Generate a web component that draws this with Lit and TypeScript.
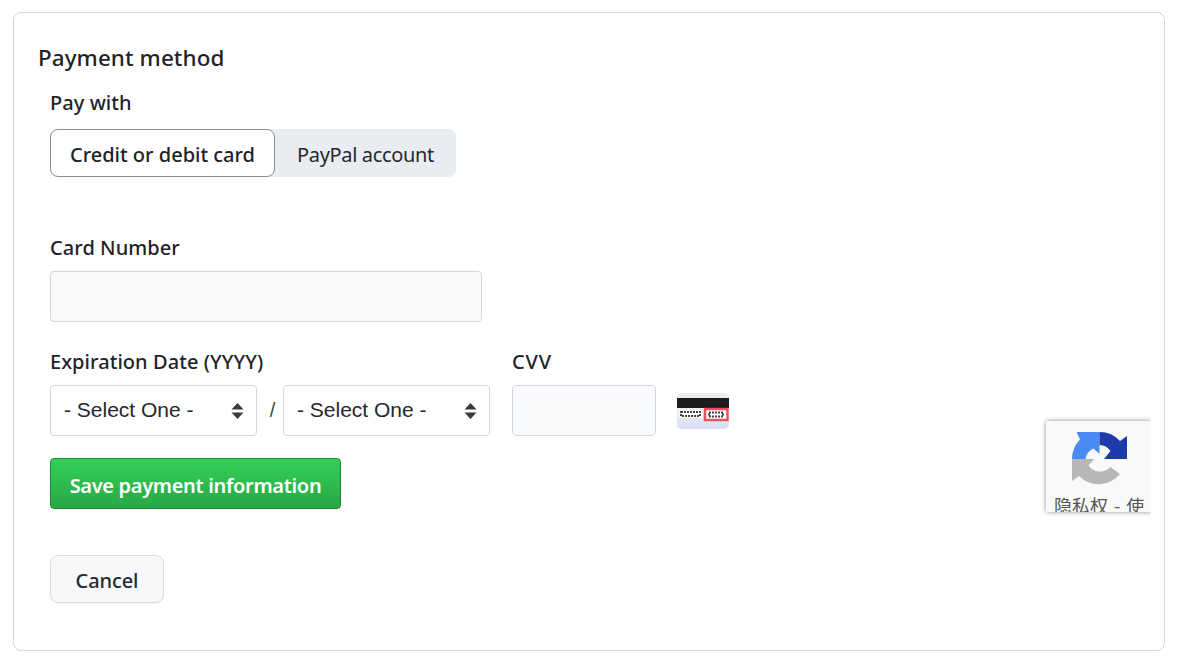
import { LitElement, html, css } from "lit";
import { customElement } from "lit/decorators.js";

@customElement("app-root")
export class AppRoot extends LitElement {
  static styles = css`
    :host { display: block; height: 661px; overflow: hidden; background: #fff; font-family: "Noto Sans", "Open Sans", sans-serif; color: #1f2328; }
    .card { position: relative; box-sizing: border-box; margin: 12px 14px 0 13px; height: 639px; border: 1px solid #d3d6dc; border-radius: 8px; padding: 28px 24px 0 24px; }
    h2 { margin: 0; font-size: 22.4px; line-height: 34px; font-weight: 500; letter-spacing: 0.1px; }
    .body { padding-left: 12px; display: flex; flex-direction: column; align-items: flex-start; }
    .label { font-size: 20px; line-height: 28px; font-weight: 500; letter-spacing: 0.06px; }
    .label.wide { letter-spacing: 0.9px; }
    .paywith { margin-top: 14px; }
    .seg { display: flex; margin-top: 12px; height: 48px; background: #e9ecf1; border-radius: 8px; }
    .seg div { box-sizing: border-box; display: flex; align-items: center; justify-content: center; font-size: 20px; padding-top: 2px; }
    .on { width: 225px; background: #fff; border: 1px solid #868f9e; border-radius: 8px; font-weight: 500; letter-spacing: 0; }
    .off { width: 181px; letter-spacing: -0.35px; color: #25292e; }
    .cardnum { margin-top: 57px; }
    input { box-sizing: border-box; display: block; background: #f9fafc; border: 1px solid #d3d6dc; border-radius: 4px; height: 51px; outline: none; padding: 0; }
    .num { width: 432px; margin-top: 9px; }
    .row { display: flex; margin-top: 26px; gap: 22px; }
    .row .label { height: 28px; }
    .controls { display: flex; align-items: center; margin-top: 9px; }
    .sel { box-sizing: border-box; width: 207px; height: 51px; background: #fff; border: 1px solid #d3d6dc; border-radius: 4px; display: flex; align-items: center; justify-content: space-between; padding: 0 12px 2px 13px; font-family: "Liberation Sans", Arial, sans-serif; font-size: 21px; color: #25292e; }
    .sel svg { margin-top: 2px; }
    .slash { width: 26px; padding-left: 5px; box-sizing: border-box; text-align: center; font-family: "Liberation Sans", Arial, sans-serif; font-size: 20px; color: #444; }
    .cvv { width: 144px; }
    .cvvrow { gap: 21px; }
    .save { box-sizing: border-box; margin-top: 22px; width: 291px; height: 51px; border: 1px solid #22863a; border-radius: 4px; background: linear-gradient(#34d058, #28a745); color: #fff; font-size: 20px; font-weight: 600; font-family: inherit; letter-spacing: -0.32px; padding: 3px 0 0; }
    .cancel { box-sizing: border-box; margin-top: 46px; width: 114px; height: 48px; border: 1px solid #d8dce2; border-radius: 8px; background: #f6f8fa; color: #25292e; font-size: 20px; font-weight: 500; font-family: inherit; letter-spacing: -0.1px; padding: 2px 0 0; box-shadow: 0 1px 0 rgba(31,35,40,.04); }
    .recap { position: absolute; left: 1032px; top: 408px; width: 105px; height: 91px; background: #f9f9f9; border-radius: 2px 0 0 2px; box-shadow: 0 0 5px rgba(0,0,0,.45); overflow: hidden; clip-path: inset(-6px 0 -6px -6px); }
    .recap svg { position: absolute; left: 26px; top: 10px; }
    .recap span { position: absolute; left: 8px; top: 72px; white-space: nowrap; font-family: "Noto Sans CJK SC", sans-serif; font-size: 18px; line-height: 24px; word-spacing: 2px; color: #555; }
  `;

  arrows() {
    return html`<svg width="13" height="20" viewBox="0 0 13 20" aria-hidden="true"><path d="M6.5 2 L12.5 8.5 H0.5 Z M6.5 18 L0.5 11.5 H12.5 Z" fill="#3a3a3a"/></svg>`;
  }

  render() {
    return html`
      <div class="card">
        <h2>Payment method</h2>
        <div class="body">
          <div class="label paywith">Pay with</div>
          <div class="seg"><div class="on">Credit or debit card</div><div class="off">PayPal account</div></div>
          <div class="label cardnum">Card Number</div>
          <input class="num" />
          <div class="row">
            <div>
              <div class="label">Expiration Date (YYYY)</div>
              <div class="controls">
                <div class="sel"><span>- Select One -</span>${this.arrows()}</div>
                <span class="slash">/</span>
                <div class="sel"><span>- Select One -</span>${this.arrows()}</div>
              </div>
            </div>
            <div>
              <div class="label wide">CVV</div>
              <div class="controls cvvrow">
                <input class="cvv" />
                <svg width="52" height="36" viewBox="0 0 52 36" aria-hidden="true">
                  <defs><linearGradient id="cg" x1="0" y1="0" x2="0" y2="1"><stop offset="0" stop-color="#ececee"/><stop offset="0.5" stop-color="#eeeef4"/><stop offset="1" stop-color="#d6dcf5"/></linearGradient></defs>
                  <rect x="0" y="0" width="52" height="36" rx="5" fill="url(#cg)"/>
                  <rect x="0" y="5" width="52" height="10" fill="#1c1c1c"/>
                  <rect x="2" y="17" width="23" height="8" fill="#fff"/>
                  <path d="M4 19h19v4h-19z" fill="none" stroke="#444" stroke-width="2" stroke-dasharray="2 1"/>
                  <rect x="28" y="16" width="22.5" height="11" fill="#fff" stroke="#ee4f5c" stroke-width="2.4"/>
                  <path d="M32 19.5h14v4h-14z" fill="none" stroke="#444" stroke-width="2" stroke-dasharray="2 1"/>
                </svg>
              </div>
            </div>
          </div>
          <button class="save">Save payment information</button>
          <button class="cancel">Cancel</button>
        </div>
        <div class="recap">
          <svg width="56" height="57" viewBox="0 0 56 57" aria-hidden="true">
            <path d="M0 28 A27.5 28 0 0 1 8 8.5 L4.5 1 H27.5 V23 L21.5 17.5 A14 14 0 0 0 13.5 28 Z" fill="#4a8af4"/>
            <path d="M27.5 1 A27.5 27.5 0 0 1 48 10 L55 5 V28 H32 L38.5 20 A14 14 0 0 0 27.5 14 Z" fill="#1c3aa9"/>
            <path d="M0 28 H22 L16.5 34.5 A14 14 0 0 0 38.5 36 L48 43 A27.5 27.5 0 0 1 7 45 L0 50 Z" fill="#b7b7b7"/>
          </svg>
          <span>隐私权 - 使</span>
        </div>
      </div>
    `;
  }
}
